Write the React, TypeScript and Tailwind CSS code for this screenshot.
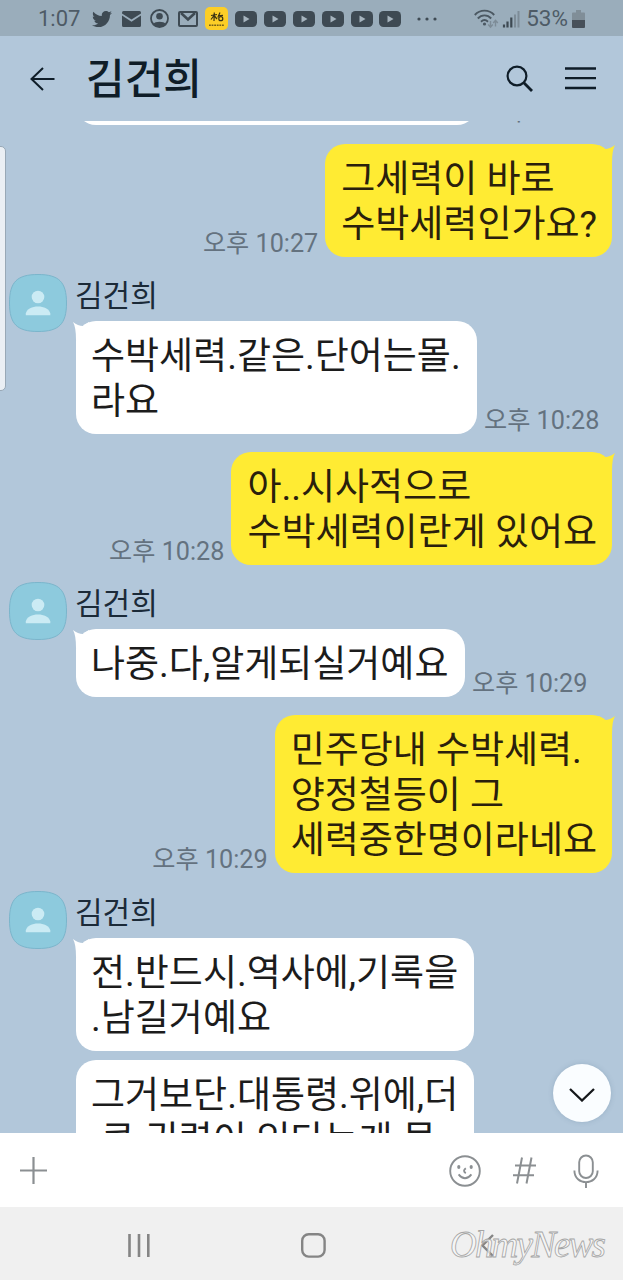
import React from "react";
import { FaTwitter } from "react-icons/fa";

const Mail = () => (
  <svg className="h-4 w-[19px]" viewBox="0 0 19 16" fill="currentColor">
    <path d="M1.5 0h16Q19 0 19 1.5V2.4L9.5 8.6 0 2.4V1.5Q0 0 1.5 0Z" />
    <path d="M0 4.6 9.5 10.8 19 4.6V14.5Q19 16 17.5 16H1.5Q0 16 0 14.5Z" />
  </svg>
);

const Account = () => (
  <svg className="size-[19px]" viewBox="0 0 19 19">
    <circle cx="9.5" cy="9.5" r="8.5" fill="none" stroke="currentColor" strokeWidth="1.8" />
    <circle cx="9.5" cy="7.3" r="3.3" fill="currentColor" />
    <path d="M3.3 15C5 11.9 14 11.9 15.7 15 12.5 18.6 6.5 18.6 3.3 15Z" fill="currentColor" />
  </svg>
);

const Gmail = () => (
  <svg className="h-4 w-5" viewBox="0 0 20 16" fill="none" stroke="currentColor" strokeWidth="2">
    <rect x="1" y="1" width="18" height="14" rx="1" />
    <path d="m3 2 7 6.5L17 2" strokeWidth="2.6" />
  </svg>
);

const Youtube = () => (
  <svg className="h-4 w-[22px]" viewBox="0 0 22 16">
    <rect width="22" height="16" rx="4.5" fill="currentColor" />
    <path d="m8.5 4.5 6 3.5-6 3.5Z" fill="#a6b4be" />
  </svg>
);

const NewsBadge = () => (
  <svg className="size-[23px]" viewBox="0 0 23 23" fill="none" stroke="#3a3214">
    <rect width="23" height="23" rx="5" fill="#fcce27" stroke="none" />
    <path d="M6 8.5 12 7.5M9.3 5.5 9 14M9 8.5 6 12.5M9.5 9 12 12M15 5.5 12.8 10.5M13 8.8 18 8.4" strokeWidth="1.2" />
    <circle cx="15.8" cy="11.7" r="2" strokeWidth="1.2" />
    <path d="M4 18.2H19" strokeWidth="1.6" strokeDasharray="1.8 .8" opacity=".7" />
  </svg>
);

const StatusBar = () => (
  <div className="flex h-9 items-center bg-[#9aadbb] pt-px pr-[38px] pl-[38px] text-[#3e4a53]">
    <span className="w-[54px] text-[22px] text-[#4e5b66]">1:07</span>
    <FaTwitter className="size-5" />
    <div className="ml-[10px] flex items-center gap-[9px]">
      <Mail />
      <Account />
      <Gmail />
    </div>
    <div className="ml-[7px]"><NewsBadge /></div>
    <div className="ml-[7px] flex gap-[6.9px]">
      {[0, 1, 2, 3, 4, 5].map((i) => <Youtube key={i} />)}
    </div>
    <svg className="ml-4 h-1 w-5" viewBox="0 0 20 4" fill="currentColor">
      <circle cx="2" cy="2" r="1.6" /><circle cx="10" cy="2" r="1.6" /><circle cx="18" cy="2" r="1.6" />
    </svg>
    <svg className="ml-auto h-5 w-[46px] shrink-0" viewBox="0 0 46 20">
      <g fill="none" stroke="#4b5862" strokeWidth="1.9">
        <path d="M.8 6C6 .2 15 .2 20.2 6" />
        <path d="M3.8 9.5C7.5 5.3 13.5 5.3 17.2 9.5" />
        <path d="M7 12.7Q10.5 9.5 14 12.7" />
      </g>
      <circle cx="10.5" cy="15" r="1.6" fill="#4b5862" />
      <g stroke="#7d8c97" strokeWidth="1.4" fill="none">
        <path d="M16.5 12v6M14.2 15.5l2.3 2.7 2.3-2.7M21.5 17.5v-6M19.2 14l2.3-2.7 2.3 2.7" />
      </g>
      <path d="M30 18.5v-3M33.5 18.5v-6M37.3 18.5V8.5" stroke="#3e4a53" strokeWidth="2.2" />
      <path d="M41 18.5V5.5M44.5 18.5V2" stroke="#7d8c97" strokeWidth="2" />
    </svg>
    <span className="ml-1.5 text-[22.5px] text-[#4e5b66]">53%</span>
    <svg className="ml-[4px] h-[18px] w-[13px]" viewBox="0 0 13 18">
      <path d="M4 0h5v2.5h3q1 0 1 1V10H0V3.5q0-1 1-1h3Z" fill="#808e98" />
      <path d="M0 10h13v7q0 1-1 1H1q-1 0-1-1Z" fill="#475059" />
    </svg>
  </div>
);

const Header = () => (
  <header className="flex h-[85px] items-center pr-[27px] pl-[30px] text-[#0f1d28]">
    <svg className="h-6 w-[25px]" viewBox="0 0 25 24" fill="none" stroke="currentColor" strokeWidth="2">
      <path d="M24.5 12H1.5M13 1 1.5 12 13 23" />
    </svg>
    <h1 className="ml-[31px] pt-0.5 text-[42px] leading-[60px] font-medium">김건희</h1>
    <svg className="ml-auto size-[27px]" viewBox="0 0 27 27" fill="none" stroke="currentColor" strokeWidth="2.2">
      <circle cx="11" cy="11" r="9.4" /><path d="m17.6 17.6 8.4 8.4" strokeWidth="2.8" />
    </svg>
    <svg className="ml-[32px] h-[23px] w-[31px]" viewBox="0 0 31 23" stroke="currentColor" strokeWidth="2.3">
      <path d="M0 1.5h31M0 11.2h31M0 21h31" />
    </svg>
  </header>
);

const Avatar = () => (
  <svg className="size-[58px] shrink-0" viewBox="0 0 58 58">
    <path d="M29 .5C50 .5 57.5 8 57.5 29S50 57.5 29 57.5.5 50 .5 29 8 .5 29 .5Z" fill="#8dcadd" stroke="#7bb5cb" />
    <circle cx="29" cy="23" r="6.3" fill="#cbebf4" />
    <path d="M16.8 41.3V39.5C18.5 30 39.5 30 41.3 39.5V41.3Z" fill="#cbebf4" />
  </svg>
);

const Time = ({ children }: { children: string }) => (
  <time className="pt-px text-[25.2px] leading-[27px] whitespace-nowrap text-[#64727f]">{children}</time>
);

const Sent = ({ lines, time, className }: { lines: string[]; time: string; className: string }) => (
  <div className={`flex items-end justify-end gap-[7px] pr-[11px] ${className}`}>
    <Time>{time}</Time>
    <div className="relative rounded-[20px] bg-[#ffeb33] pt-[13px] pr-[15px] pb-[10px] pl-4 text-[37px] leading-[45px] whitespace-nowrap text-[#2a200c]">
      <svg className="absolute top-px -right-[3px] h-[18px] w-[16px]" viewBox="0 0 16 18" fill="#ffeb33">
        <path d="M0 0 6 4Q11 4 16 0 13 5 13 18H0Z" />
      </svg>
      {lines.map((l) => <p key={l} className="relative">{l}</p>)}
    </div>
  </div>
);

const Bubble = ({ lines, time, tail, className }: { lines: string[]; time?: string; tail?: boolean; className: string }) => (
  <div className="flex items-end gap-[7px]">
    <div className={`relative rounded-[20px] bg-white pt-[13px] pb-[10px] pl-[15px] text-[37px] leading-[45px] whitespace-nowrap text-[#1c1c1c] ${className}`}>
      {tail && (
        <svg className="absolute top-px -left-[3px] h-[18px] w-[16px]" viewBox="0 0 16 18" fill="#fff">
          <path d="M16 0 10 4Q5 4 0 0 3 5 3 18H16Z" />
        </svg>
      )}
      {lines.map((l) => <p key={l} className="relative">{l}</p>)}
    </div>
    {time && <Time>{time}</Time>}
  </div>
);

const Received = ({ className, children }: { className: string; children: React.ReactNode }) => (
  <div className={`flex gap-[9px] pl-[9px] ${className}`}>
    <Avatar />
    <div className="flex flex-col gap-[9px]">
      <div>
        <div className="-ml-px mb-1 h-[43px] text-[30px] leading-[43px] text-[#1b2a38]">김건희</div>
        {Array.isArray(children) ? children[0] : children}
      </div>
      {Array.isArray(children) ? children[1] : null}
    </div>
  </div>
);

const InputBar = () => (
  <div className="flex h-[74px] shrink-0 items-center bg-white pt-px pr-6 pl-5 text-[#8b8f92]">
    <svg className="size-[27px]" viewBox="0 0 27 27" stroke="currentColor" strokeWidth="2.2"><path d="M13.5 0v27M0 13.5h27" /></svg>
    <svg className="ml-auto size-8" viewBox="0 0 32 32" fill="none" stroke="currentColor" strokeWidth="1.9">
      <circle cx="16" cy="16" r="14.8" />
      <path d="M9.6 19.3Q16 27.3 22.4 19.3M16.8 13.2Q13.3 16 16.8 18.2" />
      <ellipse cx="9.8" cy="12" rx="1.6" ry="2" fill="currentColor" stroke="none" />
      <ellipse cx="22.2" cy="12" rx="1.6" ry="2" fill="currentColor" stroke="none" />
    </svg>
    <svg className="ml-8 h-[27px] w-[23px]" viewBox="0 0 23 27" fill="none" stroke="currentColor" strokeWidth="2">
      <path d="M9 .5 4 26.5M18.5.5l-5 26M2 8.5h21M0 18.3h21" />
    </svg>
    <svg className="ml-[37px] h-[34px] w-[26px]" viewBox="0 0 26 34" fill="none" stroke="currentColor" strokeWidth="1.9">
      <rect x="6.2" y="1.5" width="13.6" height="22.5" rx="6.8" />
      <path d="M1.4 16.5C1.4 32 24.6 32 24.6 16.5M13 28v6" />
    </svg>
  </div>
);

const NavBar = () => (
  <div className="relative flex h-[73px] shrink-0 items-center bg-[#f0f0f0] pt-[3px] pl-32 text-[#858585]">
    <svg className="h-[23px] w-[22px]" viewBox="0 0 22 23" stroke="currentColor" strokeWidth="2.6"><path d="M1.5 0v23M11 0v23M20.3 0v23" /></svg>
    <svg className="ml-[151px] size-[25px]" viewBox="0 0 25 25" fill="none" stroke="currentColor" strokeWidth="2.4"><rect x="1.2" y="1.2" width="22.4" height="22.4" rx="6.5" /></svg>
    <svg className="ml-[155px] h-[23px] w-[13px]" viewBox="0 0 13 23" fill="none" stroke="currentColor" strokeWidth="2.4"><path d="M12 1 1.5 11.5 12 22" /></svg>
    <div className="absolute top-[16px] left-[450px] font-['Liberation_Serif'] text-[37px] leading-[44px] tracking-[-1.8px] text-[#f8f8f8]/70 italic [-webkit-text-stroke:0.8px_#a5a5a5]">OhmyNews</div>
  </div>
);

export default function App() {
  return (
    <div className="relative flex h-[1280px] w-[623px] flex-col overflow-hidden bg-[#b2c7da] font-[Roboto,'Noto_Sans_CJK_KR',sans-serif]">
      <StatusBar />
      <Header />
      <main className="relative h-[1012px] shrink-0 overflow-hidden">
        <div className="-mt-[64px] pl-[76px]">
          <Bubble lines={[" "]} time="오후 10:27" className="h-[68px] w-[401px]" />
        </div>
        <Sent className="mt-[19px]" lines={["그세력이 바로", "수박세력인가요?"]} time="오후 10:27" />
        <Received className="mt-[17px]">
          <Bubble tail lines={["수박세력.같은.단어는몰.", "라요"]} time="오후 10:28" className="w-[401px]" />
        </Received>
        <Sent className="mt-[18px]" lines={["아..시사적으로", "수박세력이란게 있어요"]} time="오후 10:28" />
        <Received className="mt-[17px]">
          <Bubble tail lines={["나중.다,알게되실거예요"]} time="오후 10:29" className="w-[389px]" />
        </Received>
        <Sent className="mt-[18px]" lines={["민주당내 수박세력.", "양정철등이 그", "세력중한명이라네요"]} time="오후 10:29" />
        <Received className="mt-[18px]">
          <Bubble tail lines={["전.반드시.역사에,기록을", ".남길거예요"]} className="w-[398px]" />
          <Bubble lines={["그거보단.대통령.위에,더", ".큰.권력이.있다는게.몰"]} className="w-[398px]" />
        </Received>
        <div className="absolute top-[25px] -left-2 h-[245px] w-[14px] rounded-[5px] border border-[#98a8b6] bg-[#eaeff4]" />
        <button className="absolute top-[943px] left-[553px] flex size-[58px] items-center justify-center rounded-full bg-[#fafdff] shadow-[0_0_5px_rgba(80,110,140,0.25)]">
          <svg className="mt-1 h-[14px] w-[26px]" viewBox="0 0 26 14" fill="none" stroke="#15181b" strokeWidth="2.3"><path d="m1 1 12 11.5L25 1" /></svg>
        </button>
      </main>
      <InputBar />
      <NavBar />
    </div>
  );
}
